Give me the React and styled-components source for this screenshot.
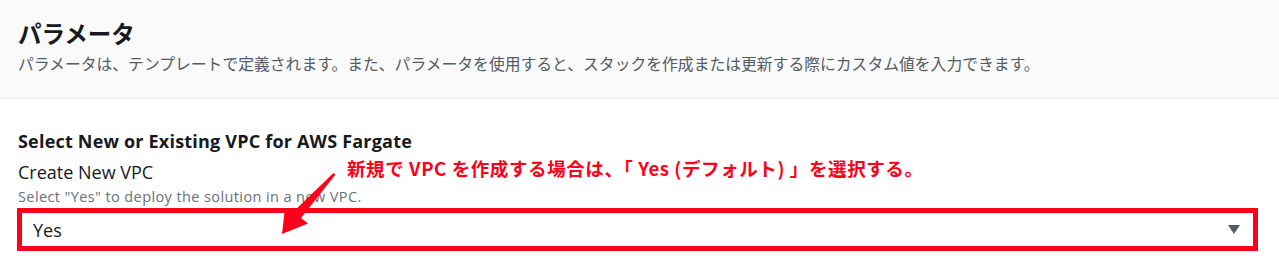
import React from "react";
import styled, { createGlobalStyle } from "styled-components";

// Base
const GlobalStyle = createGlobalStyle`
  html, body {
    margin: 0;
    padding: 0;
    background: #ffffff;
  }
  body {
    font-family: "Open Sans", "Noto Sans CJK JP", sans-serif;
    color: #16191f;
    -webkit-font-smoothing: antialiased;
  }
`;

const jp = `"Noto Sans CJK JP", "Noto Sans", sans-serif`;
const red = "#fe0019";

// Header
const Header = styled.header`
  background: #fafafa;
  border-bottom: 1px solid #eaeded;
  padding: 18px 18px 23px;
`;

const Title = styled.h2`
  margin: 0;
  font-family: ${jp};
  font-size: 23.5px;
  font-weight: 700;
  line-height: 30px;
  color: #16191f;
`;

const Description = styled.p`
  margin: 4px 0 0;
  font-family: ${jp};
  font-size: 15.8px;
  line-height: 23px;
  color: #545b64;
`;

// Body
const Body = styled.section`
  position: relative;
  padding: 31px 21px 12px 17px;
`;

const GroupTitle = styled.h3`
  margin: 0 0 0 1px;
  font-size: 18px;
  font-weight: 700;
  letter-spacing: 0.2px;
  line-height: 22px;
  color: #16191f;
`;

const Label = styled.div`
  margin: 8px 0 0 1px;
  font-size: 18px;
  line-height: 24px;
  color: #16191f;
`;

const Hint = styled.div`
  margin: 4px 0 0 1px;
  font-size: 14.5px;
  letter-spacing: 0.4px;
  line-height: 18px;
  color: #687078;
`;

const Select = styled.div`
  margin-top: 2px;
  height: 33px;
  border: 5px solid ${(p) => p.$highlight || "#aab7b8"};
  display: flex;
  align-items: center;
  justify-content: space-between;
  padding: 0 13px 0 11px;
  font-size: 18px;
  color: #16191f;
`;

const Caret = styled.span`
  width: 0;
  height: 0;
  border-left: 6.5px solid transparent;
  border-right: 6.5px solid transparent;
  border-top: 9px solid #545b64;
`;

// Annotation overlay
const Note = styled.div`
  position: absolute;
  left: 347px;
  top: 57px;
  font-family: ${jp};
  font-size: 18.5px;
  font-weight: 700;
  letter-spacing: 0.6px;
  line-height: 24px;
  color: ${red};
  white-space: pre;
`;

const ArrowSvg = styled.svg`
  position: absolute;
  left: 276px;
  top: 64px;
  overflow: visible;
`;

function Arrow() {
  return (
    <ArrowSvg width="80" height="80" viewBox="276 163 80 80">
      <path
        d="M335.5 174.5 L301 218 L308 223.5 L282 234 L285 208 L292.5 212.5 L333.5 173 Z"
        fill={red}
      />
    </ArrowSvg>
  );
}

export default function App() {
  return (
    <>
      <GlobalStyle />
      <Header>
        <Title>パラメータ</Title>
        <Description>
          パラメータは、テンプレートで定義されます。また、パラメータを使用すると、スタックを作成または更新する際にカスタム値を入力できます。
        </Description>
      </Header>
      <Body>
        <GroupTitle>Select New or Existing VPC for AWS Fargate</GroupTitle>
        <Label>Create New VPC</Label>
        <Hint>Select "Yes" to deploy the solution in a new VPC.</Hint>
        <Select $highlight={red}>
          <span>Yes</span>
          <Caret />
        </Select>
        <Note>新規で VPC を作成する場合は、「 Yes (デフォルト) 」を選択する。</Note>
        <Arrow />
      </Body>
    </>
  );
}
